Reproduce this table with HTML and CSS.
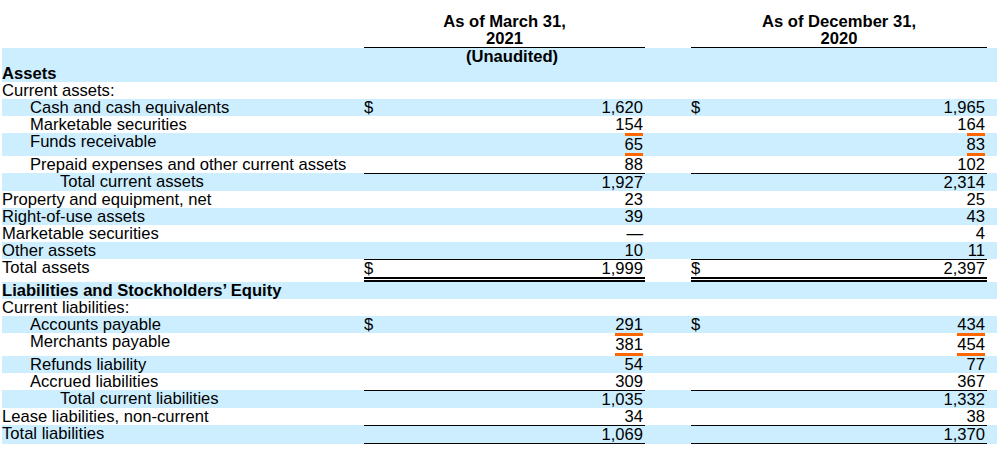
FILE: index.html
```html
<!DOCTYPE html>
<html lang="en">
<head>
<meta charset="utf-8">
<title>Condensed Consolidated Balance Sheets</title>
<link rel="stylesheet" href="styles.css">
</head>
<body>
<table class="bs">
  <colgroup>
    <col class="c-label"><col class="c-val1"><col class="c-gap"><col class="c-val2"><col class="c-tail">
  </colgroup>
  <thead>
    <tr>
      <th class="blank"></th>
      <th class="hd">As of March 31,<br>2021</th>
      <th class="blank"></th>
      <th class="hd">As of December 31,<br>2020</th>
      <th class="blank"></th>
    </tr>
  </thead>
  <tbody>
    <tr class="shade tall">
      <td class="label bold bottom">Assets</td>
      <td class="unaudited">(Unaudited)</td>
      <td></td><td></td><td></td>
    </tr>
    <tr>
      <td class="label">Current assets:</td>
      <td></td><td></td><td></td><td></td>
    </tr>
    <tr class="shade">
      <td class="label ind1">Cash and cash equivalents</td>
      <td class="val"><span class="cur">$</span>1,620</td>
      <td></td>
      <td class="val"><span class="cur">$</span>1,965</td>
      <td></td>
    </tr>
    <tr>
      <td class="label ind1">Marketable securities</td>
      <td class="val">154</td>
      <td></td>
      <td class="val">164</td>
      <td></td>
    </tr>
    <tr class="shade">
      <td class="label ind1">Funds receivable</td>
      <td class="val"><span class="hl">65</span></td>
      <td></td>
      <td class="val"><span class="hl">83</span></td>
      <td></td>
    </tr>
    <tr>
      <td class="label ind1">Prepaid expenses and other current assets</td>
      <td class="val">88</td>
      <td></td>
      <td class="val">102</td>
      <td></td>
    </tr>
    <tr class="shade">
      <td class="label ind2">Total current assets</td>
      <td class="val rule">1,927</td>
      <td></td>
      <td class="val rule">2,314</td>
      <td></td>
    </tr>
    <tr>
      <td class="label">Property and equipment, net</td>
      <td class="val">23</td>
      <td></td>
      <td class="val">25</td>
      <td></td>
    </tr>
    <tr class="shade">
      <td class="label">Right-of-use assets</td>
      <td class="val">39</td>
      <td></td>
      <td class="val">43</td>
      <td></td>
    </tr>
    <tr>
      <td class="label">Marketable securities</td>
      <td class="val">—</td>
      <td></td>
      <td class="val">4</td>
      <td></td>
    </tr>
    <tr class="shade">
      <td class="label">Other assets</td>
      <td class="val">10</td>
      <td></td>
      <td class="val">11</td>
      <td></td>
    </tr>
    <tr>
      <td class="label">Total assets</td>
      <td class="val rule dbl"><span class="cur">$</span>1,999</td>
      <td></td>
      <td class="val rule dbl"><span class="cur">$</span>2,397</td>
      <td></td>
    </tr>
    <tr class="shade">
      <td class="label bold">Liabilities and Stockholders’ Equity</td>
      <td></td><td></td><td></td><td></td>
    </tr>
    <tr>
      <td class="label">Current liabilities:</td>
      <td></td><td></td><td></td><td></td>
    </tr>
    <tr class="shade">
      <td class="label ind1">Accounts payable</td>
      <td class="val"><span class="cur">$</span>291</td>
      <td></td>
      <td class="val"><span class="cur">$</span>434</td>
      <td></td>
    </tr>
    <tr>
      <td class="label ind1">Merchants payable</td>
      <td class="val"><span class="hl">381</span></td>
      <td></td>
      <td class="val"><span class="hl">454</span></td>
      <td></td>
    </tr>
    <tr class="shade">
      <td class="label ind1">Refunds liability</td>
      <td class="val">54</td>
      <td></td>
      <td class="val">77</td>
      <td></td>
    </tr>
    <tr>
      <td class="label ind1">Accrued liabilities</td>
      <td class="val">309</td>
      <td></td>
      <td class="val">367</td>
      <td></td>
    </tr>
    <tr class="shade">
      <td class="label ind2">Total current liabilities</td>
      <td class="val rule">1,035</td>
      <td></td>
      <td class="val rule">1,332</td>
      <td></td>
    </tr>
    <tr>
      <td class="label">Lease liabilities, non-current</td>
      <td class="val">34</td>
      <td></td>
      <td class="val">38</td>
      <td></td>
    </tr>
    <tr class="shade">
      <td class="label">Total liabilities</td>
      <td class="val rule under">1,069</td>
      <td></td>
      <td class="val rule under">1,370</td>
      <td></td>
    </tr>
  </tbody>
</table>
</body>
</html>
```

FILE: styles.css
```css
html, body {
  margin: 0;
  padding: 0;
  background: #ffffff;
}

body {
  font-family: "Liberation Sans", Arial, sans-serif;
  font-size: 16.6px;
  line-height: 17px;
  color: #000000;
}

.bs {
  margin: 13px 0 0 2px;
  width: 995px;
  border-collapse: separate;
  border-spacing: 0;
  table-layout: fixed;
}

.c-label { width: 362px; }
.c-val1 { width: 281px; }
.c-gap { width: 46px; }
.c-val2 { width: 296px; }
.c-tail { width: 10px; }

.bs th,
.bs td {
  padding: 0;
  vertical-align: top;
  white-space: nowrap;
}

.hd {
  font-weight: bold;
  text-align: center;
  border-bottom: 1px solid #000000;
}

.shade td {
  background: #cceeff;
}

.tall td {
  height: 34px;
}

.bold {
  font-weight: bold;
}

.bottom {
  vertical-align: bottom !important;
}

.unaudited {
  font-weight: bold;
  text-align: center;
  padding-left: 15px !important;
}

.ind1 {
  padding-left: 28px !important;
}

.ind2 {
  padding-left: 58px !important;
}

.val {
  text-align: right;
  padding-right: 2px !important;
}

.cur {
  float: left;
}

.hl {
  display: inline-block;
  border-top: 3px solid #ff6600;
  border-bottom: 3px solid #ff6600;
}

.rule {
  border-top: 1px solid #000000;
}

.dbl {
  border-bottom: 5px double #000000;
}

.under {
  border-bottom: 1px solid #000000;
}
```
